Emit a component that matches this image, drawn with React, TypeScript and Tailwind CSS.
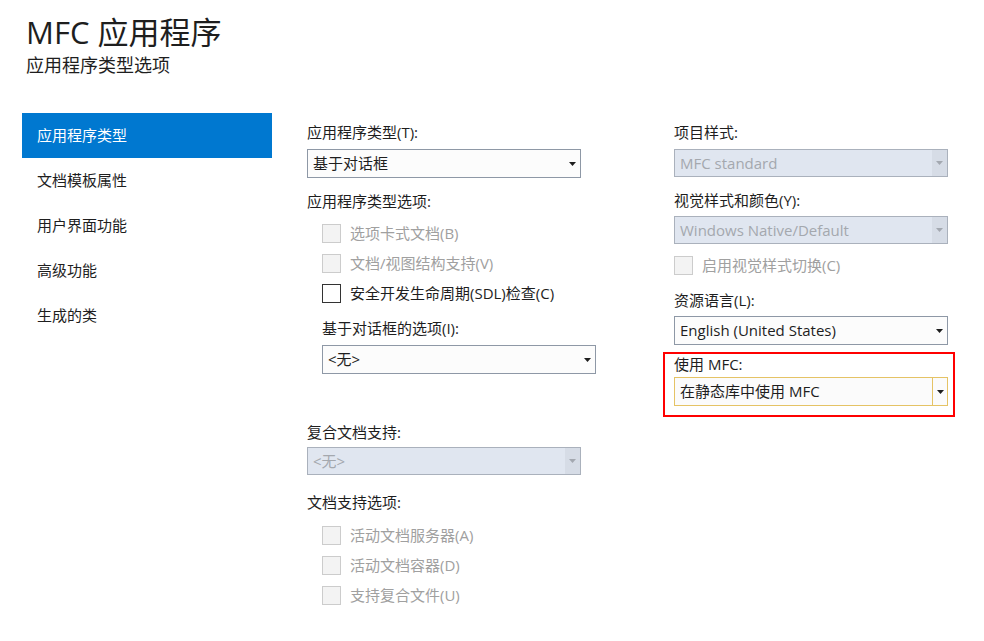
import React from 'react';

const font = { fontFamily: '"Open Sans", "Noto Sans CJK SC", sans-serif' };

const Arrow = ({ disabled }: { disabled?: boolean }) => (
  <svg width="7" height="4" viewBox="0 0 7 4" className="block">
    <path d="M0 0h7L3.5 4z" fill={disabled ? '#a3a8b0' : '#1e1e1e'} />
  </svg>
);

type SelectProps = { value: string; disabled?: boolean; highlight?: boolean; className?: string };

const Select = ({ value, disabled, highlight, className = '' }: SelectProps) => {
  if (disabled) {
    return (
      <div className={`flex h-[28px] w-[274px] border border-[#aab1bc] bg-[#e0e6f0] ${className}`}>
        <div className="flex flex-1 items-center pl-[5px] text-[15px] text-[#a4a8ae]">{value}</div>
        <div className="flex w-[15px] items-center justify-center bg-[#d6dce6]">
          <Arrow disabled />
        </div>
      </div>
    );
  }
  if (highlight) {
    return (
      <div className={`flex h-[29px] w-[274px] border border-[#e5c365] bg-[#fbfbfb] ${className}`}>
        <div className="flex flex-1 items-center pl-[5px] text-[15px] text-[#1e1e1e]">{value}</div>
        <div className="flex w-[15px] items-center justify-center border-l border-[#e5c365]">
          <Arrow />
        </div>
      </div>
    );
  }
  return (
    <div className={`flex h-[29px] w-[274px] border border-[#8e98a6] bg-[#fcfcfc] ${className}`}>
      <div className="flex flex-1 items-center pl-[5px] text-[15px] text-[#1e1e1e]">{value}</div>
      <div className="flex w-[15px] items-center justify-center">
        <Arrow />
      </div>
    </div>
  );
};

const Label = ({ children, className = '' }: { children: React.ReactNode; className?: string }) => (
  <div className={`h-[20px] text-[15px] leading-[20px] text-[#1e1e1e] ${className}`}>{children}</div>
);

const Check = ({ label, disabled }: { label: string; disabled?: boolean }) => (
  <div className="flex h-[30px] items-center gap-[9px]">
    <div
      className={
        disabled
          ? 'h-[19px] w-[19px] border border-[#cccccc] bg-[#f3f3f3]'
          : 'h-[19px] w-[19px] border border-[#333333] bg-white'
      }
    />
    <span className={`text-[15px] leading-[20px] ${disabled ? 'text-[#a0a0a0]' : 'text-[#1e1e1e]'}`}>{label}</span>
  </div>
);

const navItems = ['应用程序类型', '文档模板属性', '用户界面功能', '高级功能', '生成的类'];

export default function App() {
  return (
    <div className="h-[641px] w-[984px] overflow-hidden bg-white" style={font}>
      <div className="pl-[26px] pt-[12px]">
        <div className="text-[31px] leading-[40px] text-[#1e1e1e]">MFC 应用程序</div>
        <div className="mt-[1px] text-[18px] leading-[24px] text-[#1e1e1e]">应用程序类型选项</div>
      </div>

      <div className="mt-[36px] flex">
        {/* sidebar */}
        <div className="ml-[22px] flex w-[250px] flex-col">
          {navItems.map((item, i) => (
            <div
              key={item}
              className={`flex h-[45px] items-center pl-[15px] text-[15px] ${
                i === 0 ? 'bg-[#0078d0] text-white' : 'text-[#1e1e1e]'
              }`}
            >
              {item}
            </div>
          ))}
        </div>

        {/* middle column */}
        <div className="ml-[35px] flex w-[290px] flex-col pt-[9px]">
          <Label>应用程序类型(T):</Label>
          <Select value="基于对话框" className="mt-[7px]" />
          <Label className="mt-[13px]">应用程序类型选项:</Label>
          <div className="mt-[7px] flex flex-col pl-[15px]">
            <Check label="选项卡式文档(B)" disabled />
            <Check label="文档/视图结构支持(V)" disabled />
            <Check label="安全开发生命周期(SDL)检查(C)" />
          </div>
          <Label className="ml-[15px] mt-[10px]">基于对话框的选项(I):</Label>
          <Select value="<无>" className="ml-[15px] mt-[7px]" />
          <Label className="mt-[48px]">复合文档支持:</Label>
          <Select value="<无>" disabled className="mt-[5px]" />
          <Label className="mt-[17px]">文档支持选项:</Label>
          <div className="mt-[8px] flex flex-col pl-[15px]">
            <Check label="活动文档服务器(A)" disabled />
            <Check label="活动文档容器(D)" disabled />
            <Check label="支持复合文件(U)" disabled />
          </div>
        </div>

        {/* right column */}
        <div className="ml-[77px] flex w-[290px] flex-col pt-[9px]">
          <Label>项目样式:</Label>
          <Select value="MFC standard" disabled className="mt-[7px]" />
          <Label className="mt-[13px]">视觉样式和颜色(Y):</Label>
          <Select value="Windows Native/Default" disabled className="mt-[6px]" />
          <div className="mt-[6px]">
            <Check label="启用视觉样式切换(C)" disabled />
          </div>
          <Label className="mt-[10px]">资源语言(L):</Label>
          <Select value="English (United States)" className="mt-[6px]" />
          <div className="-ml-[11px] mt-[7px] w-[292px] border-2 border-[#ff0000] pb-[9px] pl-[9px]">
            <Label>使用 MFC:</Label>
            <Select value="在静态库中使用 MFC" highlight className="mt-[3px]" />
          </div>
        </div>
      </div>
    </div>
  );
}
